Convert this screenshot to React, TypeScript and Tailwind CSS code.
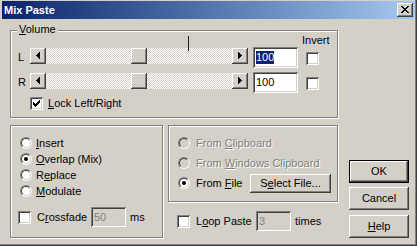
import React from "react";

const RAISED =
  "shadow-[inset_-1px_-1px_#404040,inset_1px_1px_#ffffff,inset_-2px_-2px_#808080,inset_2px_2px_#d4d0c8]";
const SUNKEN =
  "shadow-[inset_1px_1px_#808080,inset_-1px_-1px_#ffffff,inset_2px_2px_#404040,inset_-2px_-2px_#d4d0c8]";
const ETCHED =
  "border border-[#808080] shadow-[1px_1px_0_#ffffff,inset_1px_1px_0_#ffffff]";
const DISABLED = "text-[#808080] [text-shadow:1px_1px_0_#ffffff]";

const CHECK_TOPS = [2, 3, 4, 3, 2, 1, 0];
const CHECK_PATH = CHECK_TOPS.map((t, c) => `M${3 + c} ${3 + t}h1v3h-1z`).join("");

const X_ROWS: [number, number][][] = [
  [[4, 2], [10, 2]],
  [[5, 2], [9, 2]],
  [[6, 4]],
  [[7, 2]],
  [[6, 4]],
  [[5, 2], [9, 2]],
  [[4, 2], [10, 2]],
];
const X_PATH = X_ROWS.map((segs, r) =>
  segs.map(([x, w]) => `M${x} ${3 + r}h${w}v1h-${w}z`).join("")
).join("");

const LEFT_ARROW = "M6 7h1v1H6z M7 6h1v3H7z M8 5h1v5H8z M9 4h1v7H9z";
const RIGHT_ARROW = "M6 4h1v7H6z M7 5h1v5H7z M8 6h1v3H8z M9 7h1v1H9z";

function Check({ checked = false }: { checked?: boolean }) {
  return (
    <div className={`w-[13px] h-[13px] shrink-0 bg-white ${SUNKEN}`}>
      {checked && (
        <svg width="13" height="13" viewBox="0 0 13 13" shapeRendering="crispEdges">
          <path d={CHECK_PATH} fill="#000" />
        </svg>
      )}
    </div>
  );
}

function Radio({ checked = false, disabled = false }: { checked?: boolean; disabled?: boolean }) {
  return (
    <div className="relative w-3 h-3 shrink-0 rounded-full border border-t-[#808080] border-l-[#808080] border-b-white border-r-white">
      <div
        className={`w-full h-full rounded-full border border-t-[#404040] border-l-[#404040] border-b-[#d4d0c8] border-r-[#d4d0c8] flex items-center justify-center ${
          disabled ? "bg-[#d4d0c8]" : "bg-white"
        }`}
      >
        {checked && <div className="w-1 h-1 rounded-full bg-black" />}
      </div>
    </div>
  );
}

function ArrowBtn({ dir }: { dir: "left" | "right" }) {
  return (
    <div className={`w-4 h-4 shrink-0 bg-[#d4d0c8] ${RAISED}`}>
      <svg width="16" height="16" viewBox="0 0 16 16" shapeRendering="crispEdges">
        <path d={dir === "left" ? LEFT_ARROW : RIGHT_ARROW} fill="#000" />
      </svg>
    </div>
  );
}

function Scroll() {
  return (
    <div className="flex w-[218px] h-4 shrink-0 bg-[conic-gradient(#ffffff_25%,#d4d0c8_0_50%,#ffffff_0_75%,#d4d0c8_0)] bg-[length:2px_2px]">
      <ArrowBtn dir="left" />
      <div className="flex-1">
        <div className={`ml-[85px] w-4 h-4 bg-[#d4d0c8] ${RAISED}`} />
      </div>
      <ArrowBtn dir="right" />
    </div>
  );
}

function VolRow({ label, selected = false, extra = "" }: { label: string; selected?: boolean; extra?: string }) {
  return (
    <div className={`flex items-start h-[21px] pl-[7px] ${extra}`}>
      <span className="w-[12px] mt-[4px]">{label}</span>
      <div className="mt-[1px]">
        <Scroll />
      </div>
      <div className={`ml-[5px] w-[45px] h-[21px] bg-white ${SUNKEN} flex items-center pl-[3px]`}>
        {selected ? <span className="bg-[#0a246a] text-white">100</span> : <span>100</span>}
      </div>
      <div className="ml-[8px] mt-[5px]">
        <Check />
      </div>
    </div>
  );
}

function RadioRow({ children, checked = false }: { children: React.ReactNode; checked?: boolean }) {
  return (
    <div className="h-4 flex items-center gap-[4px]">
      <Radio checked={checked} />
      <span>{children}</span>
    </div>
  );
}

export default function App() {
  return (
    <div className="w-[417px] h-[246px] bg-[#d4d0c8] overflow-hidden font-[family-name:'Liberation_Sans',Arial,sans-serif] text-[11px] leading-[13px] text-black shadow-[inset_-1px_-1px_#404040,inset_-2px_-2px_#808080]">
      {/* Title bar */}
      <div className="mx-[2px] mt-[1px] h-[18px] flex items-center pl-[2px] pr-[2px] bg-linear-to-r from-[#0a246a] to-[#a6caf0]">
        <span className="flex-1 font-bold text-white">Mix Paste</span>
        <div className={`w-4 h-[14px] bg-[#d4d0c8] ${RAISED}`}>
          <svg width="16" height="14" viewBox="0 0 16 14" shapeRendering="crispEdges">
            <path d={X_PATH} fill="#000" />
          </svg>
        </div>
      </div>

      <div className="flex">
        <div className="ml-[10px] w-[328px] flex flex-col">
          {/* Volume group */}
          <div className={`relative mt-[11px] h-[88px] ${ETCHED}`}>
            <span className="absolute left-[6px] top-[-8px] px-[2px] bg-[#d4d0c8]">
              <u>V</u>olume
            </span>
            <div className="absolute left-[177px] top-[5px] w-px h-[15px] bg-[#202020]" />
            <div className="h-4 pt-[3px] pl-[291px]">Invert</div>
            <VolRow label="L" selected />
            <VolRow label="R" extra="mt-[4px]" />
            <div className="mt-[4px] flex items-center pl-[19px] gap-[5px]">
              <Check checked />
              <span>
                <u>L</u>ock Left/Right
              </span>
            </div>
          </div>

          <div className="mt-[7px] flex gap-[5px]">
            {/* Paste mode group */}
            <div className={`w-[153px] h-[113px] ${ETCHED} pt-[9px]`}>
              <div className="flex flex-col pl-[9px]">
                <RadioRow>
                  <u>I</u>nsert
                </RadioRow>
                <RadioRow checked>
                  <u>O</u>verlap (Mix)
                </RadioRow>
                <RadioRow>
                  R<u>e</u>place
                </RadioRow>
                <RadioRow>
                  <u>M</u>odulate
                </RadioRow>
              </div>
              <div className="mt-[8px] h-[20px] flex items-center pl-[7px]">
                <Check />
                <span className="ml-[6px] w-[54px]">
                  C<u>r</u>ossfade
                </span>
                <div className={`w-[35px] h-[20px] bg-[#d4d0c8] ${SUNKEN} flex items-center pl-[3px] text-[#808080]`}>
                  50
                </div>
                <span className="ml-[4px]">ms</span>
              </div>
            </div>

            {/* Source group + loop */}
            <div className="w-[170px] flex flex-col">
              <div className={`h-[77px] ${ETCHED} pt-[7px] pl-[9px]`}>
                <div className="h-[20px] flex items-center">
                  <Radio disabled />
                  <span className={`ml-[6px] ${DISABLED}`}>
                    From <u>C</u>lipboard
                  </span>
                </div>
                <div className="h-[20px] flex items-center">
                  <Radio disabled />
                  <span className={`ml-[6px] ${DISABLED}`}>
                    From <u>W</u>indows Clipboard
                  </span>
                </div>
                <div className="h-[20px] flex items-center">
                  <Radio checked />
                  <span className="ml-[6px] w-[54px]">
                    From <u>F</u>ile
                  </span>
                  <button className={`w-[81px] h-[19px] bg-[#d4d0c8] ${RAISED} flex items-center justify-center`}>
                    <span>
                      S<u>e</u>lect File...
                    </span>
                  </button>
                </div>
              </div>
              <div className="mt-[9px] h-[20px] flex items-center pl-[9px]">
                <Check />
                <span className="ml-[6px] w-[60px]">
                  L<u>o</u>op Paste
                </span>
                <div className={`w-[35px] h-[20px] bg-[#d4d0c8] ${SUNKEN} flex items-center pl-[3px] text-[#808080]`}>
                  3
                </div>
                <span className="ml-[4px]">times</span>
              </div>
            </div>
          </div>
        </div>

        {/* Buttons */}
        <div className="ml-[11px] pt-[141px] w-[60px] flex flex-col">
          <button className="h-[23px] bg-[#d4d0c8] shadow-[inset_0_0_0_1px_#000000,inset_-2px_-2px_#404040,inset_2px_2px_#ffffff,inset_-3px_-3px_#808080,inset_3px_3px_#d4d0c8] flex items-center justify-center">
            OK
          </button>
          <button className={`mt-[4px] h-[23px] bg-[#d4d0c8] ${RAISED} flex items-center justify-center`}>
            Cancel
          </button>
          <button className={`mt-[5px] h-[23px] bg-[#d4d0c8] ${RAISED} flex items-center justify-center`}>
            <span>
              <u>H</u>elp
            </span>
          </button>
        </div>
      </div>
    </div>
  );
}
